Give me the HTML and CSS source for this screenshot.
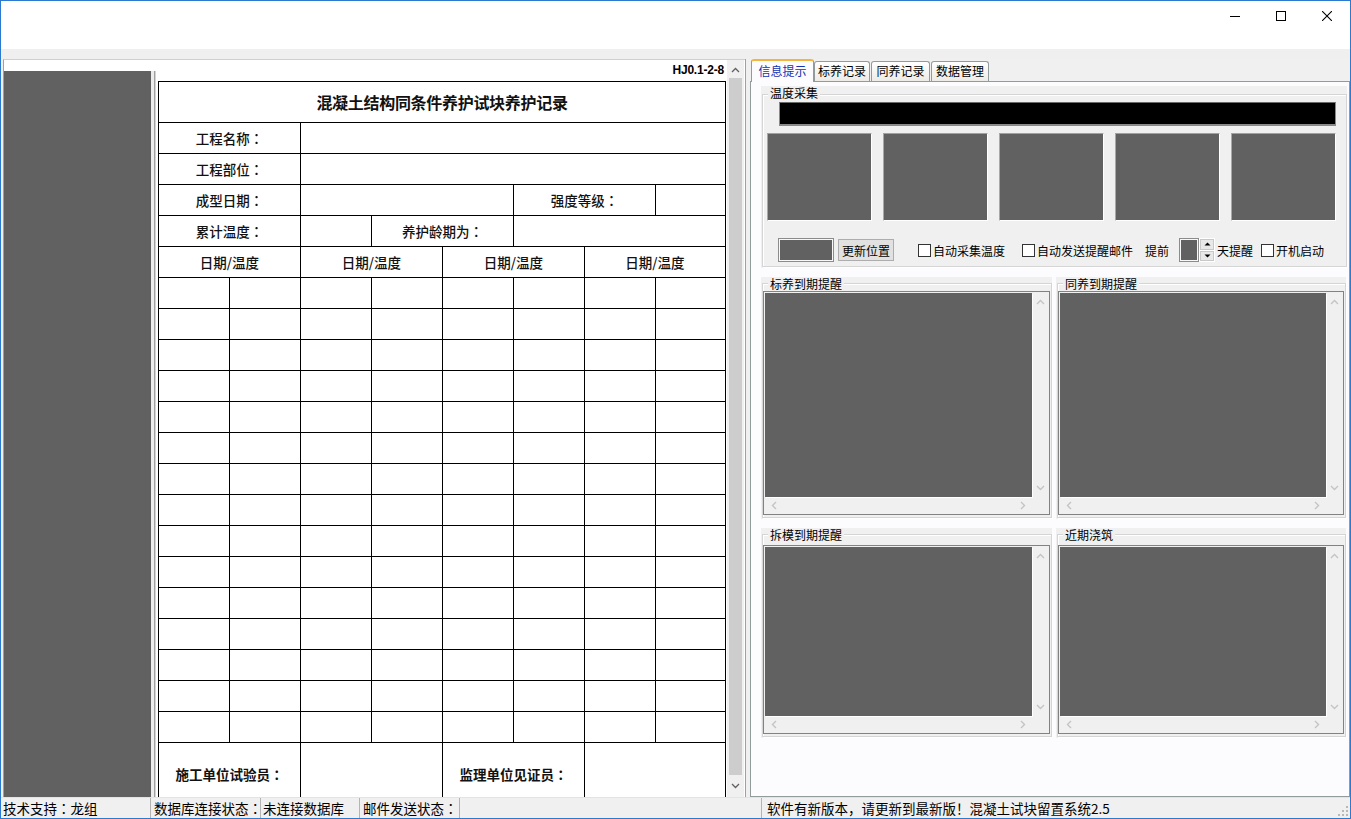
FILE: index.html
```html
<!DOCTYPE html>
<html lang="zh-CN">
<head>
<meta charset="utf-8">
<title>混凝土试块留置系统</title>
<link rel="stylesheet" href="styles.css">
</head>
<body>
<div class="window">
  <div class="titlebar">
    <div class="caption">
      <span class="cbtn"><svg width="10" height="10" viewBox="0 0 10 10"><line x1="0" y1="5.5" x2="10" y2="5.5" stroke="#000" stroke-width="1"/></svg></span>
      <span class="cbtn"><svg width="10" height="10" viewBox="0 0 10 10"><rect x="0.5" y="0.5" width="9" height="9" fill="none" stroke="#000" stroke-width="1"/></svg></span>
      <span class="cbtn"><svg width="10" height="10" viewBox="0 0 10 10"><path d="M0,0 L10,10 M10,0 L0,10" stroke="#000" stroke-width="1.1" fill="none"/></svg></span>
    </div>
  </div>
  <div class="band"></div>
  <div class="main">
    <div class="left">
      <div class="leftin">
        <div class="dark"></div>
        <div class="split1"></div>
        <div class="formview">
          <div class="formcontent">
            <div class="code">HJ0.1-2-8</div>
            <div class="sheet">
              <div class="c title">混凝土结构同条件养护试块养护记录</div>

              <div class="c s2 lbl">工程名称<span class="colon">：</span></div><div class="c s6"></div>
              <div class="c s2 lbl">工程部位<span class="colon">：</span></div><div class="c s6"></div>
              <div class="c s2 lbl">成型日期<span class="colon">：</span></div><div class="c s3"></div><div class="c s2 lbl">强度等级<span class="colon">：</span></div><div class="c"></div>
              <div class="c s2 lbl">累计温度<span class="colon">：</span></div><div class="c"></div><div class="c s2 lbl">养护龄期为<span class="colon">：</span></div><div class="c s3"></div>
              <div class="c s2 lbl">日期/温度</div><div class="c s2 lbl">日期/温度</div><div class="c s2 lbl">日期/温度</div><div class="c s2 lbl">日期/温度</div>

              <div class="c"></div><div class="c"></div><div class="c"></div><div class="c"></div><div class="c"></div><div class="c"></div><div class="c"></div><div class="c"></div>
              <div class="c"></div><div class="c"></div><div class="c"></div><div class="c"></div><div class="c"></div><div class="c"></div><div class="c"></div><div class="c"></div>
              <div class="c"></div><div class="c"></div><div class="c"></div><div class="c"></div><div class="c"></div><div class="c"></div><div class="c"></div><div class="c"></div>
              <div class="c"></div><div class="c"></div><div class="c"></div><div class="c"></div><div class="c"></div><div class="c"></div><div class="c"></div><div class="c"></div>
              <div class="c"></div><div class="c"></div><div class="c"></div><div class="c"></div><div class="c"></div><div class="c"></div><div class="c"></div><div class="c"></div>
              <div class="c"></div><div class="c"></div><div class="c"></div><div class="c"></div><div class="c"></div><div class="c"></div><div class="c"></div><div class="c"></div>
              <div class="c"></div><div class="c"></div><div class="c"></div><div class="c"></div><div class="c"></div><div class="c"></div><div class="c"></div><div class="c"></div>
              <div class="c"></div><div class="c"></div><div class="c"></div><div class="c"></div><div class="c"></div><div class="c"></div><div class="c"></div><div class="c"></div>
              <div class="c"></div><div class="c"></div><div class="c"></div><div class="c"></div><div class="c"></div><div class="c"></div><div class="c"></div><div class="c"></div>
              <div class="c"></div><div class="c"></div><div class="c"></div><div class="c"></div><div class="c"></div><div class="c"></div><div class="c"></div><div class="c"></div>
              <div class="c"></div><div class="c"></div><div class="c"></div><div class="c"></div><div class="c"></div><div class="c"></div><div class="c"></div><div class="c"></div>
              <div class="c"></div><div class="c"></div><div class="c"></div><div class="c"></div><div class="c"></div><div class="c"></div><div class="c"></div><div class="c"></div>
              <div class="c"></div><div class="c"></div><div class="c"></div><div class="c"></div><div class="c"></div><div class="c"></div><div class="c"></div><div class="c"></div>
              <div class="c"></div><div class="c"></div><div class="c"></div><div class="c"></div><div class="c"></div><div class="c"></div><div class="c"></div><div class="c"></div>
              <div class="c"></div><div class="c"></div><div class="c"></div><div class="c"></div><div class="c"></div><div class="c"></div><div class="c"></div><div class="c"></div>

              <div class="c s2 foot">施工单位试验员<span class="colon">：</span></div><div class="c s2 foot"></div><div class="c s2 foot">监理单位见证员<span class="colon">：</span></div><div class="c s2 foot"></div>
            </div>
          </div>
          <div class="vscroll">
            <div class="varrow"><svg width="9" height="6" viewBox="0 0 9 6"><polyline points="1,5 4.5,1.5 8,5" fill="none" stroke="#606060" stroke-width="1.3"/></svg></div>
            <div class="thumb"></div>
            <div class="varrow down"><svg width="9" height="6" viewBox="0 0 9 6"><polyline points="1,1 4.5,4.5 8,1" fill="none" stroke="#606060" stroke-width="1.3"/></svg></div>
          </div>
        </div>
      </div>
    </div>
    <div class="split2"></div>
    <div class="right">
      <div class="tabs">
        <div class="tab sel">信息提示</div>
        <div class="tab t2">标养记录</div>
        <div class="tab t3">同养记录</div>
        <div class="tab t4">数据管理</div>
      </div>
      <div class="tabpage">
        <div class="gbox temp">
          <span class="gtitle">温度采集</span>
          <div class="gframe">
            <div class="blackbar"></div>
            <div class="boxes">
              <div class="box"></div><div class="box"></div><div class="box"></div><div class="box"></div><div class="box"></div>
            </div>
            <div class="controls">
              <div class="tb"></div>
              <div class="btn">更新位置</div>
              <label class="chk c1"><span class="cb"></span>自动采集温度</label>
              <label class="chk c2"><span class="cb"></span>自动发送提醒邮件</label>
              <span class="txt pre">提前</span>
              <div class="num">
                <div class="numval"></div>
                <div class="spin">
                  <span class="sp"><svg width="7" height="4" viewBox="0 0 7 4"><polygon points="0.5,3.5 3.5,0.5 6.5,3.5" fill="#000"/></svg></span>
                  <span class="sp"><svg width="7" height="4" viewBox="0 0 7 4"><polygon points="0.5,0.5 3.5,3.5 6.5,0.5" fill="#000"/></svg></span>
                </div>
              </div>
              <span class="txt day">天提醒</span>
              <label class="chk c3"><span class="cb"></span>开机启动</label>
            </div>
          </div>
        </div>

        <div class="lists">
          <div class="gbox r1">
            <span class="gtitle">标养到期提醒</span>
            <div class="gframe">
              <div class="lb">
                <div class="lbdark"></div>
                <div class="lbv"><svg width="9" height="6" viewBox="0 0 9 6"><polyline points="1,5 4.5,1.5 8,5" fill="none" stroke="#c4c4c4" stroke-width="1.4"/></svg><svg width="9" height="6" viewBox="0 0 9 6"><polyline points="1,1 4.5,4.5 8,1" fill="none" stroke="#c4c4c4" stroke-width="1.4"/></svg></div>
                <div class="lbh"><svg width="6" height="9" viewBox="0 0 6 9"><polyline points="5,1 1.5,4.5 5,8" fill="none" stroke="#c4c4c4" stroke-width="1.4"/></svg><svg width="6" height="9" viewBox="0 0 6 9"><polyline points="1,1 4.5,4.5 1,8" fill="none" stroke="#c4c4c4" stroke-width="1.4"/></svg></div>
                <div class="lbc"></div>
              </div>
            </div>
          </div>
          <div class="gbox r1">
            <span class="gtitle">同养到期提醒</span>
            <div class="gframe">
              <div class="lb">
                <div class="lbdark"></div>
                <div class="lbv"><svg width="9" height="6" viewBox="0 0 9 6"><polyline points="1,5 4.5,1.5 8,5" fill="none" stroke="#c4c4c4" stroke-width="1.4"/></svg><svg width="9" height="6" viewBox="0 0 9 6"><polyline points="1,1 4.5,4.5 8,1" fill="none" stroke="#c4c4c4" stroke-width="1.4"/></svg></div>
                <div class="lbh"><svg width="6" height="9" viewBox="0 0 6 9"><polyline points="5,1 1.5,4.5 5,8" fill="none" stroke="#c4c4c4" stroke-width="1.4"/></svg><svg width="6" height="9" viewBox="0 0 6 9"><polyline points="1,1 4.5,4.5 1,8" fill="none" stroke="#c4c4c4" stroke-width="1.4"/></svg></div>
                <div class="lbc"></div>
              </div>
            </div>
          </div>
          <div class="gbox r2">
            <span class="gtitle">拆模到期提醒</span>
            <div class="gframe">
              <div class="lb">
                <div class="lbdark"></div>
                <div class="lbv"><svg width="9" height="6" viewBox="0 0 9 6"><polyline points="1,5 4.5,1.5 8,5" fill="none" stroke="#c4c4c4" stroke-width="1.4"/></svg><svg width="9" height="6" viewBox="0 0 9 6"><polyline points="1,1 4.5,4.5 8,1" fill="none" stroke="#c4c4c4" stroke-width="1.4"/></svg></div>
                <div class="lbh"><svg width="6" height="9" viewBox="0 0 6 9"><polyline points="5,1 1.5,4.5 5,8" fill="none" stroke="#c4c4c4" stroke-width="1.4"/></svg><svg width="6" height="9" viewBox="0 0 6 9"><polyline points="1,1 4.5,4.5 1,8" fill="none" stroke="#c4c4c4" stroke-width="1.4"/></svg></div>
                <div class="lbc"></div>
              </div>
            </div>
          </div>
          <div class="gbox r2">
            <span class="gtitle">近期浇筑</span>
            <div class="gframe">
              <div class="lb">
                <div class="lbdark"></div>
                <div class="lbv"><svg width="9" height="6" viewBox="0 0 9 6"><polyline points="1,5 4.5,1.5 8,5" fill="none" stroke="#c4c4c4" stroke-width="1.4"/></svg><svg width="9" height="6" viewBox="0 0 9 6"><polyline points="1,1 4.5,4.5 8,1" fill="none" stroke="#c4c4c4" stroke-width="1.4"/></svg></div>
                <div class="lbh"><svg width="6" height="9" viewBox="0 0 6 9"><polyline points="5,1 1.5,4.5 5,8" fill="none" stroke="#c4c4c4" stroke-width="1.4"/></svg><svg width="6" height="9" viewBox="0 0 6 9"><polyline points="1,1 4.5,4.5 1,8" fill="none" stroke="#c4c4c4" stroke-width="1.4"/></svg></div>
                <div class="lbc"></div>
              </div>
            </div>
          </div>
        </div>
      </div>
    </div>
  </div>
  <div class="status">
    <div class="si s-a">技术支持<span class="colon">：</span>龙组</div>
    <div class="si s-b">数据库连接状态<span class="colon">：</span></div>
    <div class="si s-c">未连接数据库</div>
    <div class="si s-d">邮件发送状态<span class="colon">：</span></div>
    <div class="si s-spring"></div>
    <div class="si s-e">软件有新版本，请更新到最新版！混凝土试块留置系统2.5</div>
    <div class="grip"><svg width="10" height="10" viewBox="0 0 10 10"><g fill="#b8b8b8"><rect x="8" y="0" width="2" height="2"/><rect x="4" y="4" width="2" height="2"/><rect x="8" y="4" width="2" height="2"/><rect x="0" y="8" width="2" height="2"/><rect x="4" y="8" width="2" height="2"/><rect x="8" y="8" width="2" height="2"/></g></svg></div>
  </div>
</div>
</body>
</html>
```

FILE: styles.css
```css
* { box-sizing: border-box; }
html, body { margin: 0; padding: 0; }
body {
  width: 1351px;
  height: 819px;
  overflow: hidden;
  font-family: "Noto Sans CJK SC", "Noto Sans", sans-serif;
  font-size: 12px;
  color: #000;
  background: #fff;
}
.colon { font-family: "Noto Sans CJK TC", "Noto Sans CJK SC", sans-serif; }
.window {
  width: 1351px;
  height: 819px;
  border: 1px solid #2b7ad0;
  display: flex;
  flex-direction: column;
  background: #f0f0f0;
}
.titlebar {
  height: 48px;
  flex: none;
  background: #fff;
  display: flex;
  justify-content: flex-end;
  align-items: flex-start;
}
.caption { display: flex; }
.cbtn {
  width: 46px;
  height: 30px;
  display: flex;
  align-items: center;
  justify-content: center;
}
.band { height: 10px; flex: none; background: #efefef; }
.main { height: 738px; flex: none; display: flex; }

/* ---------- left side ---------- */
.left {
  width: 744px;
  flex: none;
  display: flex;
  padding-left: 2px;
  background: #f0f0f0;
}
.leftin {
  flex: 1;
  display: flex;
  border-left: 1px solid #a0a0a0;
  border-top: 1px solid #cfcfcf;
  background: #fff;
  overflow: hidden;
}
.dark { width: 147px; flex: none; margin-top: 11px; background: #616161; }
.split1 {
  width: 7px;
  flex: none;
  margin-top: 11px;
  background: linear-gradient(to right, #ececec 0 3px, #a0a0a0 3px 4px, #d4d4d4 4px 5px, #fff 5px);
}
.formview { flex: 1; display: flex; overflow: hidden; }
.formcontent { width: 569px; flex: none; overflow: hidden; }
.code {
  height: 21px;
  line-height: 21px;
  text-align: right;
  padding-right: 3px;
  font-family: "Liberation Sans", Arial, sans-serif;
  font-weight: bold;
  font-size: 12px;
  letter-spacing: -0.2px;
}
.sheet {
  width: 568px;
  display: grid;
  grid-template-columns: repeat(7, 71px) 70px;
  grid-template-rows: 41px repeat(20, 31px) 62px;
  border-left: 1px solid #000;
  border-top: 1px solid #000;
}
.c {
  border-right: 1px solid #000;
  border-bottom: 1px solid #000;
  display: flex;
  align-items: center;
  justify-content: center;
  font-size: 13.5px;
  color: #111;
}
.s2 { grid-column: span 2; }
.s3 { grid-column: span 3; }
.s6 { grid-column: span 6; }
.title {
  grid-column: span 8;
  font-size: 16px;
  font-weight: bold;
  letter-spacing: -0.3px;
}
.lbl { font-weight: 500; }
.foot {
  font-weight: bold;
  font-size: 13.5px;
}
.vscroll {
  width: 17px;
  flex: none;
  background: #f0f0f0;
  display: flex;
  flex-direction: column;
  padding-top: 1px;
}
.varrow {
  height: 17px;
  flex: none;
  display: flex;
  align-items: center;
  justify-content: center;
}
.varrow.down { flex: 1; }
.thumb { height: 697px; flex: none; margin: 0 2px; background: #cdcdcd; }
.split2 {
  width: 5px;
  flex: none;
  background: #f0f0f0;
  border-left: 1px solid #a0a0a0;
}

/* ---------- right side ---------- */
.right { width: 600px; flex: none; display: flex; flex-direction: column; }
.tabs {
  height: 22px;
  flex: none;
  display: flex;
  align-items: flex-end;
  padding-left: 1px;
  background: #f0f0f0;
  position: relative;
  z-index: 1;
}
.tab {
  height: 20px;
  border: 1px solid #919b9c;
  border-bottom: none;
  border-radius: 3px 3px 0 0;
  background: linear-gradient(#ffffff, #ecebe6);
  line-height: 18px;
  text-align: center;
  font-size: 12px;
}
.tab.sel {
  width: 63px;
  height: 23px;
  margin-bottom: -1px;
  background: #fcfcfe;
  border-top: 2px solid #f4b440;
  color: #1533b0;
  line-height: 20px;
}
.tab.t2 { width: 56px; }
.tab.t3 { width: 59px; margin-left: 1px; }
.tab.t4 { width: 58px; margin-left: 1px; }
.tabpage {
  flex: 1;
  border: 1px solid #919b9c;
  background: #fcfcfe;
  padding: 4px 2px 0 10px;
}
.gbox {
  position: relative;
  background: #f0f0f0;
  padding: 7px 0 1px 1px;
}
.gframe {
  border: 1px solid #d5d5d5;
  box-shadow: inset 1px 1px 0 #fff, 1px 1px 0 #fff;
}
.gtitle {
  position: absolute;
  left: 7px;
  top: 0;
  padding: 0 2px;
  background: #f0f0f0;
  line-height: 14px;
  font-size: 12px;
}
.temp { padding-top: 8px; }
.temp .gframe { padding: 7px 0 4px 0; }
.blackbar {
  height: 24px;
  margin: 0 10px 0 16px;
  background: #000;
  border: 1px solid #8a8a8a;
  border-bottom-width: 2px;
  border-top-color: #6a6a6a;
}
.boxes {
  display: flex;
  justify-content: space-between;
  margin-top: 7px;
  padding: 0 10px 0 4px;
}
.box {
  width: 105px;
  height: 88px;
  background: #616161;
  border-top: 1px solid #a0a0a0;
  border-left: 1px solid #a8a8a8;
  border-bottom: 1px solid #fff;
  border-right: 1px solid #fff;
}
.controls {
  display: flex;
  align-items: center;
  height: 24px;
  margin-top: 17px;
  padding-left: 15px;
}
.tb {
  width: 56px;
  height: 24px;
  background: #616161;
  border: 1px solid #8c8c8c;
  box-shadow: inset 0 0 0 1px #f8f8f8;
}
.btn {
  width: 56px;
  height: 22px;
  margin-left: 4px;
  background: #e1e1e1;
  border: 1px solid #adadad;
  display: flex;
  align-items: center;
  justify-content: center;
  font-size: 12px;
}
.chk { display: flex; align-items: center; font-size: 12px; white-space: nowrap; }
.cb {
  width: 13px;
  height: 13px;
  border: 1px solid #333;
  background: #fff;
  margin-right: 2px;
}
.c1 { margin-left: 24px; }
.c2 { margin-left: 17px; }
.txt { font-size: 12px; white-space: nowrap; }
.pre { margin-left: 12px; }
.num { display: flex; margin-left: 10px; height: 24px; }
.numval {
  width: 20px;
  height: 24px;
  background: #616161;
  border: 1px solid #8c8c8c;
  box-shadow: inset 0 0 0 1px #f8f8f8;
}
.spin {
  width: 16px;
  display: flex;
  flex-direction: column;
  background: #fff;
  padding: 1px;
  gap: 1px;
}
.sp {
  flex: 1;
  background: #e8e8e8;
  border: 1px solid #c8c8c8;
  display: flex;
  align-items: center;
  justify-content: center;
}
.day { margin-left: 2px; }
.c3 { margin-left: 8px; }

.lists {
  display: grid;
  grid-template-columns: 291px 290px;
  column-gap: 4px;
  row-gap: 9px;
  margin-top: 9px;
}
.r1 { padding-top: 6px; }
.r2 { padding-top: 6px; }
.r1 .gframe, .r2 .gframe { padding: 7px 1px 2px 0; }
.r2 .gframe { padding-top: 10px; }
.lb {
  border: 1px solid #828282;
  background: #f0f0f0;
  display: grid;
  grid-template-columns: 1fr 17px;
  grid-template-rows: 1fr 17px;
  padding: 1px 0 0 1px;
}
.r1 .lb { height: 224px; }
.r2 .lb { height: 189px; }
.lbdark { background: #616161; box-shadow: 1px 1px 0 #fff; }
.lbv {
  display: flex;
  flex-direction: column;
  justify-content: space-between;
  align-items: center;
  padding: 6px 0 6px;
}
.lbh {
  display: flex;
  justify-content: space-between;
  align-items: center;
  padding: 0 6px 0 6px;
}

/* ---------- status bar ---------- */
.status {
  height: 21px;
  flex: none;
  display: flex;
  align-items: stretch;
  background: #f0f0f0;
  font-size: 13.5px;
  white-space: nowrap;
  border-top: 1px solid #e3e3e3;
}
.si {
  display: flex;
  align-items: center;
  border-right: 1px solid #b4b4b4;
  overflow: hidden;
}
.s-a { width: 150px; padding-left: 2px; }
.s-b { width: 110px; padding-left: 3px; }
.s-c { width: 99px; padding-left: 2px; }
.s-d { width: 100px; padding-left: 3px; }
.s-spring { flex: 1; border-right: 1px solid #b4b4b4; }
.s-e { width: 574px; padding-left: 5px; border-right: none; }
.grip { width: 14px; display: flex; align-items: flex-end; justify-content: flex-end; padding: 0 2px 2px 0; }
```
